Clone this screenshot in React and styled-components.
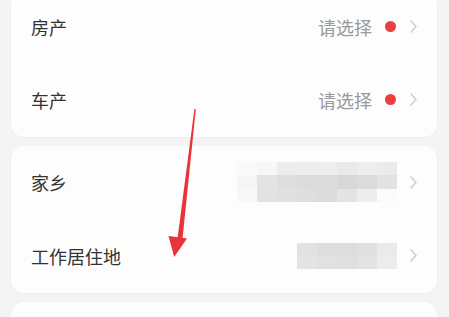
import React from "react";
import styled, { createGlobalStyle } from "styled-components";

const Global = createGlobalStyle`
  html, body { margin: 0; padding: 0; background: #f4f4f4; overflow: hidden; }
  body { font-family: "Noto Sans CJK SC", "Noto Sans", sans-serif; }
`;

const Page = styled.div`
  position: relative;
  width: 449px;
  height: 317px;
  overflow: hidden;
  background: #f4f4f4;
`;

const Stack = styled.div`
  display: flex;
  flex-direction: column;
  gap: 9px;
  padding: 0 12px 0 11px;
  margin-top: -9px;
`;

const Card = styled.div`
  background: #fdfdfd;
  border-radius: 13px;
  box-shadow: 0 1px 3px rgba(0, 0, 0, 0.03);
  display: flex;
  flex-direction: column;
`;

const Row = styled.div`
  height: ${(p) => p.$h || 73}px;
  display: flex;
  align-items: center;
  padding: 0 20px 2px 20px;
  box-sizing: border-box;
`;

const Label = styled.div`
  font-size: 18px;
  color: #333;
  flex: 1;
  line-height: 1;
`;

const Hint = styled.div`
  font-size: 18px;
  color: #999;
  line-height: 1;
`;

const Dot = styled.span`
  width: 11px;
  height: 11px;
  border-radius: 50%;
  background: #e8403f;
  margin: 0 14px 0 13px;
`;

const Chevron = styled.svg`
  width: 7px;
  height: 13px;
  margin-left: ${(p) => p.$ml || 0}px;
`;

const Mosaic = styled.div`
  display: grid;
  grid-template-columns: repeat(${(p) => p.$cols}, 1fr);
  width: ${(p) => p.$w}px;
  height: ${(p) => p.$h}px;
`;

const Cell = styled.div`
  background: ${(p) => p.$c};
`;

const Arrow = styled.svg`
  position: absolute;
  left: 0;
  top: 0;
  pointer-events: none;
`;

const Chev = ({ ml }) => (
  <Chevron $ml={ml} viewBox="0 0 7 13">
    <path d="M1 1 L6 6.5 L1 12" fill="none" stroke="#cfcfcf" strokeWidth="1.6" strokeLinecap="round" strokeLinejoin="round" />
  </Chevron>
);

const homeCells = [
  "#fafafa", "#f7f7f7", "#ececec", "#ededed", "#eeeeee", "#e9e9e9", "#eeeeee", "#ebebeb",
  "#f6f6f6", "#e3e3e3", "#dedede", "#dcdcdc", "#dcdcdc", "#d8d8d8", "#dbdbdb", "#e2e2e2",
  "#f8f8f8", "#e2e2e2", "#e0e0e0", "#dedede", "#dbdbdb", "#e4e4e4", "#ededed", "#fbfbfb",
];
const workCells = [
  "#e2e2e2", "#dedede", "#dddddd", "#e0e0e0", "#eaeaea",
  "#e4e4e4", "#e1e1e1", "#dfdfdf", "#e3e3e3", "#ececec",
];

export default function App() {
  return (
    <Page>
      <Global />
      <Stack>
        <Card>
          <Row $h={73}>
            <Label>房产</Label>
            <Hint>请选择</Hint>
            <Dot />
            <Chev />
          </Row>
          <Row $h={73}>
            <Label>车产</Label>
            <Hint>请选择</Hint>
            <Dot />
            <Chev />
          </Row>
        </Card>
        <Card>
          <Row $h={74}>
            <Label>家乡</Label>
            <Mosaic $cols={8} $w={160} $h={40}>
              {homeCells.map((c, i) => (
                <Cell key={i} $c={c} />
              ))}
            </Mosaic>
            <Chev ml={13} />
          </Row>
          <Row $h={73}>
            <Label>工作居住地</Label>
            <Mosaic $cols={5} $w={100} $h={26}>
              {workCells.map((c, i) => (
                <Cell key={i} $c={c} />
              ))}
            </Mosaic>
            <Chev ml={13} />
          </Row>
        </Card>
        <Card style={{ height: 60 }} />
      </Stack>
      <Arrow width="449" height="317" viewBox="0 0 449 317">
        <polygon points="194.4,109 195.8,109.2 182.6,238 177.6,238" fill="#e8333a" />
        <polygon points="168.5,236 187,238.5 174.2,257" fill="#e8333a" />
      </Arrow>
    </Page>
  );
}
